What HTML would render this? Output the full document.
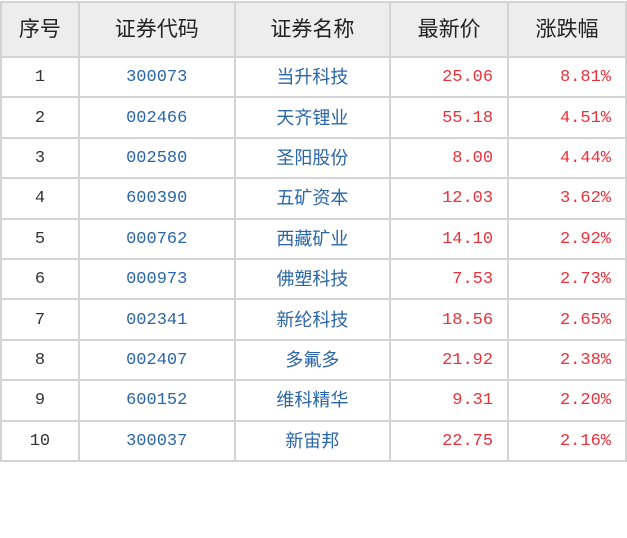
<!DOCTYPE html>
<html><head><meta charset="utf-8"><style>
body{margin:0;background:#fff;width:627px;height:538px;overflow:hidden}
table{border-collapse:collapse;table-layout:fixed;position:absolute;left:0;top:1px}
td,th{border:2px solid #d4d4d4;padding:0;font-family:"Liberation Mono","Noto Sans CJK SC",monospace;font-size:17px;vertical-align:middle;line-height:20px}
th{background:#ededed;height:53px;font-family:"Liberation Sans","Noto Sans CJK SC",sans-serif;font-size:21px;font-weight:normal;color:#222}
td{height:36.4px;padding-top:2px;text-align:center;color:#333}
td.c{color:#2a66a8}
td.n{color:#2a66a8;font-family:"Liberation Sans","Noto Sans CJK SC",sans-serif;font-size:18px;padding-top:0;height:38.4px}
td.r{color:#e8323c;text-align:right;padding-right:14px}
</style></head><body>
<table>
<colgroup><col style="width:78px"><col style="width:156px"><col style="width:156px"><col style="width:118px"><col style="width:118px"></colgroup>
<tr><th>序号</th><th>证券代码</th><th>证券名称</th><th>最新价</th><th>涨跌幅</th></tr>
<tr><td>1</td><td class="c">300073</td><td class="n">当升科技</td><td class="r">25.06</td><td class="r">8.81%</td></tr>
<tr><td>2</td><td class="c">002466</td><td class="n">天齐锂业</td><td class="r">55.18</td><td class="r">4.51%</td></tr>
<tr><td>3</td><td class="c">002580</td><td class="n">圣阳股份</td><td class="r">8.00</td><td class="r">4.44%</td></tr>
<tr><td>4</td><td class="c">600390</td><td class="n">五矿资本</td><td class="r">12.03</td><td class="r">3.62%</td></tr>
<tr><td>5</td><td class="c">000762</td><td class="n">西藏矿业</td><td class="r">14.10</td><td class="r">2.92%</td></tr>
<tr><td>6</td><td class="c">000973</td><td class="n">佛塑科技</td><td class="r">7.53</td><td class="r">2.73%</td></tr>
<tr><td>7</td><td class="c">002341</td><td class="n">新纶科技</td><td class="r">18.56</td><td class="r">2.65%</td></tr>
<tr><td>8</td><td class="c">002407</td><td class="n">多氟多</td><td class="r">21.92</td><td class="r">2.38%</td></tr>
<tr><td>9</td><td class="c">600152</td><td class="n">维科精华</td><td class="r">9.31</td><td class="r">2.20%</td></tr>
<tr><td>10</td><td class="c">300037</td><td class="n">新宙邦</td><td class="r">22.75</td><td class="r">2.16%</td></tr>
</table>
</body></html>
